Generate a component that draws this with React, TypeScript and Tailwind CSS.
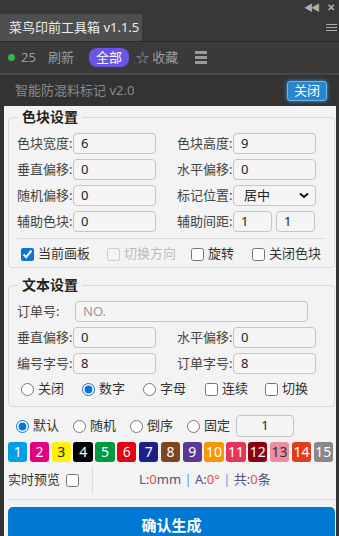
import React from "react";

const FONT = { fontFamily: '"Noto Sans", "Noto Sans CJK SC", sans-serif' };

const swatches = [
  { n: 1, bg: "bg-[#00a0e9]", fg: "text-white" },
  { n: 2, bg: "bg-[#e4007f]", fg: "text-white" },
  { n: 3, bg: "bg-[#fff100]", fg: "text-[#222]" },
  { n: 4, bg: "bg-[#000000]", fg: "text-white" },
  { n: 5, bg: "bg-[#009944]", fg: "text-white" },
  { n: 6, bg: "bg-[#e60012]", fg: "text-white" },
  { n: 7, bg: "bg-[#1d2088]", fg: "text-white" },
  { n: 8, bg: "bg-[#7f4520]", fg: "text-white" },
  { n: 9, bg: "bg-[#5b3a95]", fg: "text-white" },
  { n: 10, bg: "bg-[#f39800]", fg: "text-white" },
  { n: 11, bg: "bg-[#e8335a]", fg: "text-white" },
  { n: 12, bg: "bg-[#8b0012]", fg: "text-white" },
  { n: 13, bg: "bg-[#ef8da0]", fg: "text-[#333]" },
  { n: 14, bg: "bg-[#e03c1e]", fg: "text-white" },
  { n: 15, bg: "bg-[#898989]", fg: "text-white" },
];

function Field({ value, w = "w-[83px]" }: { value: string; w?: string }) {
  return (
    <div className={`${w} h-[21px] border border-[#c4c4c4] rounded-[4px] bg-[#f5f5f5] pl-[7px] flex items-center text-[13px] text-[#222]`}>
      {value}
    </div>
  );
}

function Label({ text, w = "w-[56px]" }: { text: string; w?: string }) {
  return <span className={`${w} shrink-0 text-[13px] text-[#444] leading-[21px] whitespace-nowrap`}>{text}</span>;
}

function Check({ label, checked = false, disabled = false, w }: { label: string; checked?: boolean; disabled?: boolean; w?: string }) {
  return (
    <label className={`${w ?? ""} flex items-center gap-[4px] text-[13px] ${disabled ? "text-[#bbb]" : "text-[#333]"}`}>
      <input
        type="checkbox"
        defaultChecked={checked}
        disabled={disabled}
        className="w-[13px] h-[13px] m-0 accent-[#0a74d8]"
      />
      {label}
    </label>
  );
}

function Radio({ label, checked = false, w, name }: { label: string; checked?: boolean; w?: string; name: string }) {
  return (
    <label className={`${w ?? ""} flex items-center gap-[4px] text-[13px] text-[#333]`}>
      <input type="radio" name={name} defaultChecked={checked} className="w-[13px] h-[13px] m-0 accent-[#0a74d8]" />
      {label}
    </label>
  );
}

export default function App() {
  return (
    <div className="w-[339px] h-[536px] overflow-hidden bg-[#333333] flex flex-col" style={FONT}>
      {/* title strip */}
      <div className="h-[14px] shrink-0 bg-[#383838] flex items-center justify-end gap-[9px] pr-[4px] text-[#b0b0b0]">
        <span className="text-[9px] leading-none font-bold tracking-[-2px]">◀◀</span>
        <span className="text-[10px] leading-none font-bold">✕</span>
      </div>

      {/* tab row */}
      <div className="h-[28px] shrink-0 bg-[#383838] border-b border-[#2a2a2a] flex items-stretch justify-between">
        <div className="w-[142px] bg-[#4f4f4f] text-[#ececec] text-[13px] flex items-center pl-[9px] whitespace-nowrap">
          菜鸟印前工具箱 v1.1.5
        </div>
        <div className="flex flex-col justify-center gap-[2px] pr-[2px]">
          <div className="w-[11px] h-[1px] bg-[#aaa]" />
          <div className="w-[11px] h-[1px] bg-[#aaa]" />
          <div className="w-[11px] h-[1px] bg-[#aaa]" />
        </div>
      </div>

      {/* toolbar */}
      <div className="h-[33px] shrink-0 bg-[#3a3a3a] border-b-[2px] border-[#474747] flex items-center pl-[8px] text-[13px] text-[#9c9c9c]">
        <span className="w-[7px] h-[7px] rounded-full bg-[#3ab54a]" />
        <span className="ml-[6px]">25</span>
        <span className="ml-[12px]">刷新</span>
        <span className="ml-[15px] w-[40px] h-[19px] rounded-[8px] bg-[#6a55e4] text-white flex items-center justify-center">全部</span>
        <span className="ml-[7px]">☆ 收藏</span>
        <div className="ml-[17px] flex flex-col gap-[2px]">
          <div className="w-[12px] h-[3px] bg-[#9a9a9a]" />
          <div className="w-[12px] h-[3px] bg-[#9a9a9a]" />
          <div className="w-[12px] h-[3px] bg-[#9a9a9a]" />
        </div>
      </div>

      {/* header */}
      <div className="h-[31px] shrink-0 bg-[#333333] flex items-center justify-between pl-[15px] pr-[12px]">
        <span className="text-[13px] text-[#8a8a8a]">智能防混料标记 v2.0</span>
        <button className="w-[40px] h-[20px] rounded-[3px] bg-[#2a86cc] border border-[#6bb8ee] text-white text-[13px] leading-none shadow-[0_0_4px_#3a9ae0]">
          关闭
        </button>
      </div>

      {/* content */}
      <div className="flex-1 ml-[4px] mr-[3px] bg-[#f3f3f3] pl-[4px] pr-[1px] pt-[1px] flex flex-col">
        <fieldset className="shrink-0 border border-[#d9d9d9] rounded-[4px] px-[8px] pb-[4px]">
          <legend className="ml-[1px] px-[4px] text-[14px] font-bold text-[#222] leading-[20px]">色块设置</legend>
          <div className="pt-[6px] flex flex-col gap-[5px]">
            <div className="flex items-center">
              <Label text="色块宽度:" />
              <Field value="6" />
              <div className="w-[21px]" />
              <Label text="色块高度:" />
              <Field value="9" />
            </div>
            <div className="flex items-center">
              <Label text="垂直偏移:" />
              <Field value="0" />
              <div className="w-[21px]" />
              <Label text="水平偏移:" />
              <Field value="0" />
            </div>
            <div className="flex items-center">
              <Label text="随机偏移:" />
              <Field value="0" />
              <div className="w-[21px]" />
              <Label text="标记位置:" />
              <div className="w-[83px] h-[21px] border border-[#c4c4c4] rounded-[4px] bg-[#f5f5f5] pl-[10px] pr-[6px] flex items-center justify-between text-[13px] text-[#222]">
                居中
                <svg width="10" height="7" viewBox="0 0 10 7">
                  <path d="M1 1.5 L5 5 L9 1.5" fill="none" stroke="#111" strokeWidth="2" />
                </svg>
              </div>
            </div>
            <div className="flex items-center">
              <Label text="辅助色块:" />
              <Field value="0" />
              <div className="w-[21px]" />
              <Label text="辅助间距:" />
              <div className="flex gap-[4px]">
                <Field value="1" w="w-[39px]" />
                <Field value="1" w="w-[39px]" />
              </div>
            </div>
          </div>
          <div className="mt-[6px] h-[1px] bg-[#dcdcdc]" />
          <div className="mt-[6px] h-[18px] flex items-center pl-[4px]">
            <Check label="当前画板" checked w="w-[86px]" />
            <Check label="切换方向" disabled w="w-[84px]" />
            <Check label="旋转" w="w-[61px]" />
            <Check label="关闭色块" />
          </div>
        </fieldset>

        <fieldset className="shrink-0 mt-[7px] border border-[#d9d9d9] rounded-[4px] px-[8px] pb-[7px]">
          <legend className="ml-[1px] px-[4px] text-[14px] font-bold text-[#222] leading-[20px]">文本设置</legend>
          <div className="pt-[6px] flex flex-col gap-[5px]">
            <div className="flex items-center">
              <Label text="订单号:" w="w-[58px]" />
              <div className="w-[233px] h-[21px] border border-[#c4c4c4] rounded-[4px] bg-[#f5f5f5] pl-[7px] flex items-center text-[13px] text-[#999]">
                NO.
              </div>
            </div>
            <div className="flex items-center">
              <Label text="垂直偏移:" />
              <Field value="0" />
              <div className="w-[21px]" />
              <Label text="水平偏移:" />
              <Field value="0" />
            </div>
            <div className="flex items-center">
              <Label text="编号字号:" />
              <Field value="8" />
              <div className="w-[21px]" />
              <Label text="订单字号:" />
              <Field value="8" />
            </div>
          </div>
          <div className="mt-[5px] h-[20px] flex items-center pl-[4px]">
            <Radio name="t" label="关闭" w="w-[61px]" />
            <Radio name="t" label="数字" checked w="w-[61px]" />
            <Radio name="t" label="字母" w="w-[62px]" />
            <Check label="连续" w="w-[60px]" />
            <Check label="切换" />
          </div>
        </fieldset>

        <div className="shrink-0 mt-[8px] h-[22px] flex items-center pl-[8px]">
          <Radio name="o" label="默认" checked w="w-[57px]" />
          <Radio name="o" label="随机" w="w-[57px]" />
          <Radio name="o" label="倒序" w="w-[57px]" />
          <Radio name="o" label="固定" w="w-[49px]" />
          <div className="w-[58px] h-[22px] border border-[#c4c4c4] rounded-[4px] bg-[#f5f5f5] flex items-center justify-center text-[13px] text-[#222]">
            1
          </div>
        </div>

        <div className="shrink-0 mt-[5px] mr-[2px] flex gap-[2.5px]">
          {swatches.map((s) => (
            <div
              key={s.n}
              className={`flex-1 h-[20px] rounded-[3px] ${s.bg} ${s.fg} text-[14px] leading-none flex items-center justify-center`}
            >
              {s.n}
            </div>
          ))}
        </div>

        <div className="shrink-0 mt-[6px] h-[24px] flex items-center">
          <span className="text-[13px] text-[#333]">实时预览</span>
          <input type="checkbox" className="ml-[6px] w-[13px] h-[13px] m-0" />
          <div className="ml-[13px] w-[1px] h-[26px] bg-[#dcdcdc]" />
          <div className="ml-[46px] text-[13px] text-[#55527a]">
            L:<span className="text-[#e05050]">0</span>mm <span className="text-[#5b9bd5]">|</span> A:
            <span className="text-[#e05050]">0°</span> <span className="text-[#5b9bd5]">|</span> 共:
            <span className="text-[#e05050]">0</span>条
          </div>
        </div>

        <div className="shrink-0 mt-[7px] h-[1px] bg-[#dcdcdc]" />

        <button className="mt-[7px] h-[36px] w-full shrink-0 rounded-t-[5px] bg-[#0078d4] text-white text-[15px] font-bold leading-none">
          确认生成
        </button>
      </div>
    </div>
  );
}
